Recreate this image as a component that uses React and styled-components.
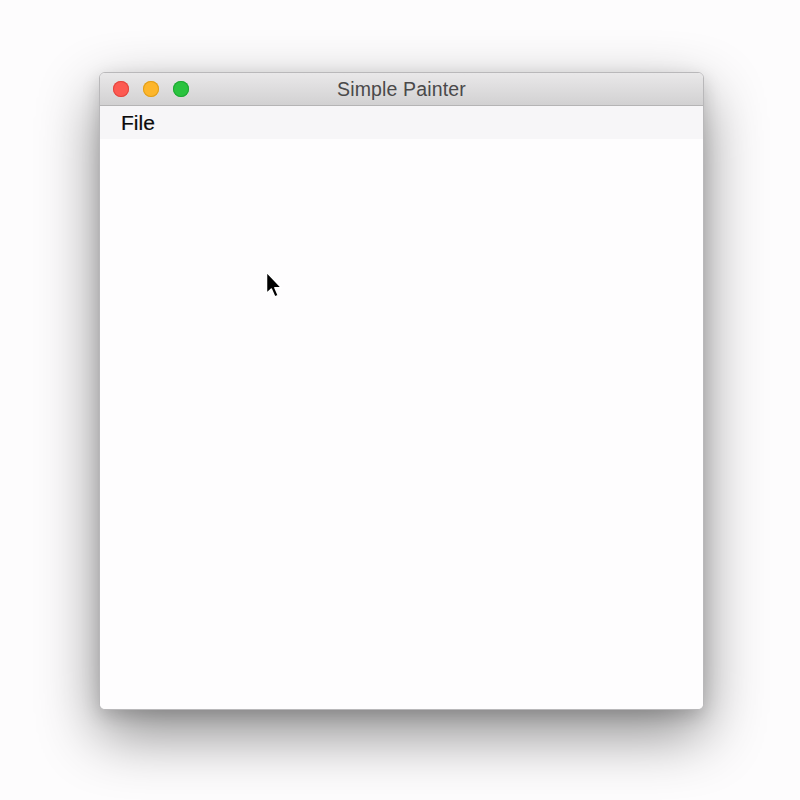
import React from "react";
import styled, { createGlobalStyle } from "styled-components";

const Global = createGlobalStyle`
  html, body { margin: 0; padding: 0; background: #ffffff; }
  body { font-family: "Liberation Sans", Arial, sans-serif; }
`;

const Stage = styled.div`
  width: 800px;
  height: 800px;
  box-sizing: border-box;
  padding: 72px 96px 90px 99px;
  display: flex;
  background: #fdfcfd;
`;

const Window = styled.div`
  flex: 1;
  display: flex;
  flex-direction: column;
  border: 1px solid #b9b8ba;
  border-radius: 6px;
  overflow: hidden;
  background: #fefdfe;
  box-shadow: 0 24px 60px rgba(0, 0, 0, 0.45), 0 6px 18px rgba(0, 0, 0, 0.15);
`;

const TitleBar = styled.div`
  position: relative;
  height: 32px;
  display: flex;
  align-items: center;
  justify-content: center;
  background: linear-gradient(#e9e8e9, #d2d1d2);
  border-bottom: 1px solid #b5b4b5;
`;

const Lights = styled.div`
  position: absolute;
  left: 13px;
  top: 8px;
  display: flex;
  gap: 14px;
`;

const Light = styled.span`
  width: 16px;
  height: 16px;
  border-radius: 50%;
  background: ${(p) => p.$c};
  box-shadow: inset 0 0 0 1px ${(p) => p.$b};
`;

const Title = styled.div`
  font-size: 19.5px;
  color: #4a494a;
  letter-spacing: 0.15px;
  margin-top: 1px;
`;

const MenuBar = styled.div`
  height: 33px;
  display: flex;
  align-items: center;
  padding-left: 21px;
  background: #f7f6f8;
`;

const MenuItem = styled.div`
  font-size: 21px;
  color: #0a0a0a;
  -webkit-text-stroke: 0.2px #0a0a0a;
`;

const Canvas = styled.div`
  position: relative;
  flex: 1;
  background: #fefdfe;
`;

const Cursor = styled.svg`
  position: absolute;
  left: 164px;
  top: 132px;
`;

export default function App() {
  return (
    <>
      <Global />
      <Stage>
        <Window>
          <TitleBar>
            <Lights>
              <Light $c="#fd5a52" $b="#e2463f" />
              <Light $c="#fdb62c" $b="#e09e1a" />
              <Light $c="#2ac33f" $b="#1ea833" />
            </Lights>
            <Title>Simple Painter</Title>
          </TitleBar>
          <MenuBar>
            <MenuItem>File</MenuItem>
          </MenuBar>
          <Canvas>
            <Cursor width="20" height="30" viewBox="0 0 18 28">
              <path
                d="M2 1 L2 21 L6.5 16.8 L9.8 24.3 L13 22.9 L9.8 15.6 L16 15.6 Z"
                fill="#000"
                stroke="#fff"
                strokeWidth="1.4"
                strokeLinejoin="round"
              />
            </Cursor>
          </Canvas>
        </Window>
      </Stage>
    </>
  );
}
